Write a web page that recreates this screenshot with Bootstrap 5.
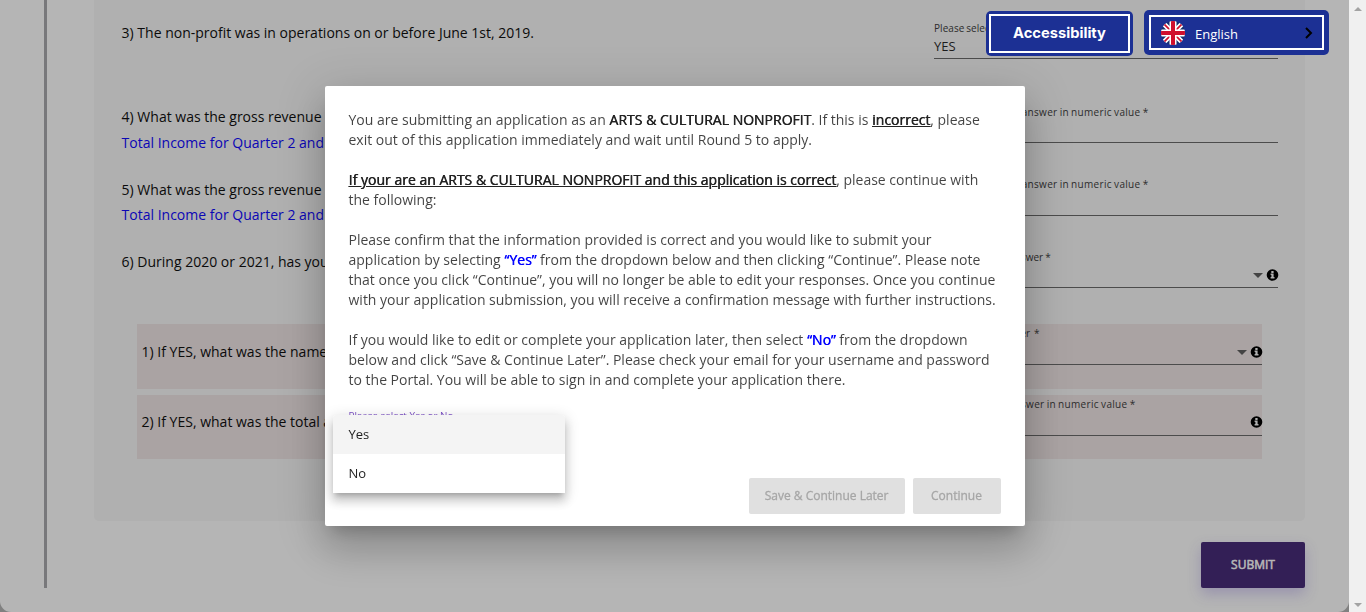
<!DOCTYPE html>
<html lang="en">
<head>
<meta charset="utf-8">
<meta name="viewport" content="width=device-width, initial-scale=1">
<title>Grant application</title>
<link href="https://cdn.jsdelivr.net/npm/bootstrap@5.3.0/dist/css/bootstrap.min.css" rel="stylesheet">
<style>
  body { font-family: "Open Sans", sans-serif; font-size: 14px; line-height: 20px; color: #0b0b0b; background: #f0f0f0; height: 612px; overflow: hidden; }
  .page-wrap { width: 1349px; height: 612px; background: #808080; }
  .page-sheet { height: 612px; background: #b5b5b5; border-radius: 0 0 11px 11px; padding-left: 44px; padding-right: 44px; }
  .side-rule { width: 3px; height: 588px; background: #78787b; }
  .question-panel { width: 1211px; height: 521px; margin-left: 47px; background: #b0b0b0; border-radius: 0 0 5px 5px; padding: 0 27px; }
  .question { height: 73px; }
  .question.tall { height: 84px; }
  .question-text { padding-top: 20px; padding-left: .6px; line-height: 26px; white-space: nowrap; }
  .question-text .note { color: #0b06b5; }
  .field { width: 344px; height: 59px; border-bottom: 1px solid #4c4c4c; padding-top: 20px; }
  .field-label { font-size: 10px; line-height: 16px; color: #2c2c2c; white-space: nowrap; letter-spacing: .32px; word-spacing: -.75px; }
  .field-label.pick { letter-spacing: .05px; }
  .field-value { font-size: 13px; line-height: 20px; color: #1c1c1c; }
  .sub-question { margin: 0 16px 6px 16px; height: 65px; background: #aaa3a3; padding-left: 4px; }
  .sub-question .question-text { padding-top: 15px; }
  .sub-question .field { width: 341px; height: 41px; padding-top: 1px; }
  .sub-question.second { height: 64px; }
  .sub-question.second .question-text { padding-top: 14px; }
  .caret { width: 0; height: 0; border: 5px solid transparent; border-top-color: #444; border-bottom: 0; }
  .submit-btn { width: 104px; height: 46px; background: #331f56; color: #b5b5b5; font-size: 12px; border-radius: 2px; box-shadow: 0 6px 14px rgba(80,60,150,.28); border: 0; -webkit-text-stroke: .6px currentColor; }
  .submit-btn:hover { background: #331f56; color: #b5b5b5; }
  .scroll-track { width: 17px; height: 612px; padding: 7px 0 5px; }
  .scroll-track i { width: 0; height: 0; border: 4px solid transparent; }
  .scroll-track .up { border-bottom-color: #a3a3a3; border-top: 0; }
  .scroll-track .down { border-top-color: #a3a3a3; border-bottom: 0; }
  .confirm { width: 1349px; overflow: hidden; }
  .confirm .modal-dialog { width: 700px; max-width: 700px; min-height: 612px; margin: 0 auto; }
  .confirm .modal-content { height: 440px; border: 0; border-radius: 2px; padding: 24px 24px 12px; color: rgba(0,0,0,.74); box-shadow: 0 11px 15px -7px rgba(0,0,0,.2), 0 24px 38px 3px rgba(0,0,0,.14), 0 9px 46px 8px rgba(0,0,0,.12); }
  .confirm p { margin: 0 0 20px; white-space: nowrap; }
  .strong-text { font-weight: 400; color: #222; text-shadow: .5px 0 0 currentColor; }
  .strong-text.blue { color: #0000ff; }
  .select-label { font-size: 9.8px; line-height: 14px; color: #7b4fc4; padding-top: 19px; }
  .idle-btn { height: 36px; background: #e0e0e0; color: #a6a6a6; font-size: 12px; border: 0; border-radius: 2px; padding: 0 16px; -webkit-text-stroke: .3px currentColor; }
  .choices { display: block; left: 8px; top: 329px; width: 232px; min-width: 0; padding: 0; margin: 0; border: 0; border-radius: 3px 3px 0 0; box-shadow: 0 5px 5px -3px rgba(0,0,0,.2), 0 8px 10px 1px rgba(0,0,0,.14), 0 3px 14px 2px rgba(0,0,0,.12); overflow: hidden; }
  .choices .dropdown-item { height: 39px; padding: 9px 16px; font-size: 13px; line-height: 20px; color: #222; }
  .choices .dropdown-item.current { background: #f4f4f4; }
  .float-tools { top: 10px; right: 37px; z-index: 1080; gap: 11px; }
  .tool { background: #1c3094; color: #fff; border-radius: 5px; }
  .tool-inner { border: 2px solid #fff; }
  .access-tool { width: 147px; height: 45px; padding: 3px; margin-top: 1px; font-family: Inter, sans-serif; font-weight: 700; font-size: 14.7px; }
  .access-tool .tool-inner { padding-bottom: 1px; }
  .lang-tool { width: 185px; height: 45px; padding: 5px; font-size: 13px; }
  .lang-name { margin-left: 10px; padding-top: 2px; }
</style>
</head>
<body>
<div class="d-flex">
  <div class="page-wrap">
    <main class="page-sheet d-flex">
      <div class="side-rule flex-shrink-0"></div>
      <div class="d-flex flex-column align-items-end">
        <section class="question-panel">
          <div class="question tall d-flex justify-content-between">
            <div class="question-text">3) The non-profit was in operations on or before June 1st, 2019.</div>
            <div class="field"><div class="field-label pick">Please select an answer *</div><div class="field-value">YES</div></div>
          </div>
          <div class="question d-flex justify-content-between">
            <div class="question-text">4) What was the gross revenue<div class="note">Total Income for Quarter 2 and</div></div>
            <div class="field"><div class="field-label">Please enter your answer in numeric value *</div></div>
          </div>
          <div class="question d-flex justify-content-between" style="height:72px">
            <div class="question-text">5) What was the gross revenue<div class="note" style="margin-top:-1px">Total Income for Quarter 2 and</div></div>
            <div class="field" style="padding-top:19px"><div class="field-label">Please enter your answer in numeric value *</div></div>
          </div>
          <div class="question d-flex justify-content-between" style="height:95px">
            <div class="question-text">6) During 2020 or 2021, has your</div>
            <div class="field"><div class="field-label pick">Please select an answer *</div>
              <div class="d-flex justify-content-end align-items-center gap-1"><span class="caret"></span>
                <svg width="11" height="20" viewBox="0 0 11 20" overflow="visible"><circle cx="5.5" cy="10" r="5.8" fill="#000"/><path d="M4.3 6h2.3v1.9H4.3zM3.6 8.6h3v3.4h.9v1.5H3.6V12h.8v-1.9h-.8z" fill="#b0b0b0"/></svg></div>
            </div>
          </div>
          <div class="sub-question d-flex justify-content-between">
            <div class="question-text">1) If YES, what was the name</div>
            <div class="field"><div class="field-label pick">Please select an answer &nbsp;*</div>
              <div class="d-flex justify-content-end align-items-center gap-1"><span class="caret"></span>
                <svg width="11" height="22" viewBox="0 -1 11 22" overflow="visible"><circle cx="5.5" cy="10" r="5.8" fill="#000"/><path d="M4.3 6h2.3v1.9H4.3zM3.6 8.6h3v3.4h.9v1.5H3.6V12h.8v-1.9h-.8z" fill="#b0b0b0"/></svg></div>
            </div>
          </div>
          <div class="sub-question second d-flex justify-content-between">
            <div class="question-text">2) If YES, what was the total amount</div>
            <div class="field"><div class="field-label">Please enter your answer in numeric value *</div>
              <div class="d-flex justify-content-end align-items-center">
                <svg width="11" height="20" viewBox="0 0 11 20" overflow="visible"><circle cx="5.5" cy="10" r="5.8" fill="#000"/><path d="M4.3 6h2.3v1.9H4.3zM3.6 8.6h3v3.4h.9v1.5H3.6V12h.8v-1.9h-.8z" fill="#b0b0b0"/></svg></div>
            </div>
          </div>
        </section>
        <button class="btn submit-btn" style="margin-top:21px">SUBMIT</button>
      </div>
    </main>
  </div>
  <div class="scroll-track d-flex flex-column justify-content-between align-items-center"><i class="up"></i><i class="down"></i></div>
</div>

<div class="modal confirm d-block" tabindex="-1">
  <div class="modal-dialog modal-dialog-centered">
    <div class="modal-content">
      <p>You are submitting an application as an <span class="strong-text">ARTS &amp; CULTURAL NONPROFIT</span>. If this is <u class="strong-text">incorrect</u>, please<br>exit out of this application immediately and wait until Round 5 to apply.</p>
      <p><u class="strong-text">If your are an ARTS &amp; CULTURAL NONPROFIT and this application is correct</u>, please continue with<br>the following:</p>
      <p>Please confirm that the information provided is correct and you would like to submit your<br>application by selecting <span class="strong-text blue">“Yes”</span> from the dropdown below and then clicking “Continue”. Please note<br>that once you click “Continue”, you will no longer be able to edit your responses. Once you continue<br>with your application submission, you will receive a confirmation message with further instructions.</p>
      <p class="mb-0">If you would like to edit or complete your application later, then select <span class="strong-text blue">“No”</span> from the dropdown<br>below and click “Save &amp; Continue Later”. Please check your email for your username and password<br>to the Portal. You will be able to sign in and complete your application there.</p>
      <div class="select-label">Please select Yes or No</div>
      <div class="dropdown-menu choices">
        <a class="dropdown-item current" href="#">Yes</a>
        <a class="dropdown-item" href="#">No</a>
      </div>
      <div class="d-flex justify-content-end gap-2 mt-auto">
        <button class="btn idle-btn">Save &amp; Continue Later</button>
        <button class="btn idle-btn" style="width:88px">Continue</button>
      </div>
    </div>
  </div>
</div>

<div class="float-tools position-fixed d-flex">
  <div class="tool access-tool"><div class="tool-inner h-100 d-flex align-items-center justify-content-center">Accessibility</div></div>
  <div class="tool lang-tool"><div class="tool-inner h-100 d-flex align-items-center">
    <svg style="margin-left:10px" width="24" height="24" viewBox="0 0 24 24"><defs><clipPath id="disc"><circle cx="12" cy="12" r="12"/></clipPath></defs>
      <g clip-path="url(#disc)"><path fill="#16306f" d="M0 0h24v24H0z"/><path d="M0 0l24 24M24 0L0 24" stroke="#fff" stroke-width="5"/><path d="M0 0l24 24M24 0L0 24" stroke="#d0102e" stroke-width="1.7"/><path d="M12 0v24M0 12h24" stroke="#fff" stroke-width="7"/><path d="M12 0v24M0 12h24" stroke="#d0102e" stroke-width="4"/></g></svg>
    <span class="lang-name">English</span>
    <svg class="ms-auto" style="margin-right:9px" width="9" height="12" viewBox="0 0 9 12"><path d="M2 1l5 5-5 5" fill="none" stroke="#000" stroke-width="2"/></svg>
  </div></div>
</div>
<script src="https://cdn.jsdelivr.net/npm/bootstrap@5.3.0/dist/js/bootstrap.bundle.min.js"></script>
</body>
</html>
